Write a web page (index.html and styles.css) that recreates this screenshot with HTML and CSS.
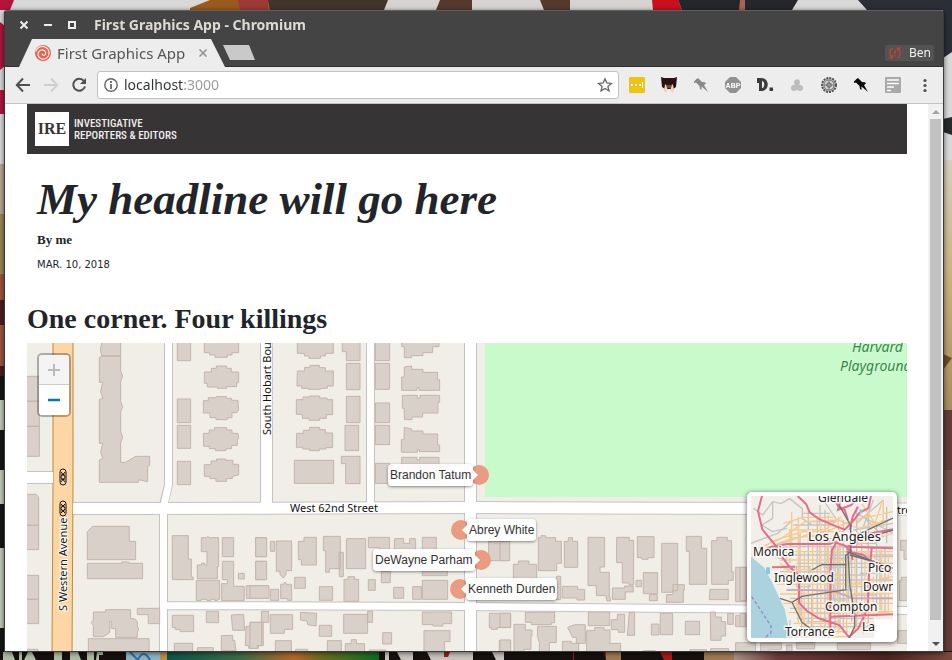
FILE: index.html
```html
<!DOCTYPE html>
<html lang="en">
<head>
<meta charset="utf-8">
<title>First Graphics App</title>
<link rel="stylesheet" href="styles.css">
</head>
<body>
<svg class="wallpaper" viewBox="0 0 952 660" preserveAspectRatio="none" aria-hidden="true">
  <defs>
    <linearGradient id="poster"><stop offset="0" stop-color="#0f5348"/><stop offset=".35" stop-color="#3d6a48"/><stop offset=".6" stop-color="#b5652a"/><stop offset=".72" stop-color="#6d6a22"/><stop offset="1" stop-color="#0f6a24"/></linearGradient>
    <linearGradient id="rust"><stop offset="0" stop-color="#a58f84"/><stop offset=".2" stop-color="#6d3b3c"/><stop offset=".7" stop-color="#4a2422"/><stop offset="1" stop-color="#7b4a3f"/></linearGradient>
    <linearGradient id="paper" x2="0" y2="1"><stop offset="0" stop-color="#d6cfbd"/><stop offset=".5" stop-color="#c8b07a"/><stop offset="1" stop-color="#a98c5c"/></linearGradient>
  </defs>
  <rect width="952" height="660" fill="#d9d8d8"/>
  <path d="M0 0h14l-4 10H0zM0 22l5 4v40l-5 4zM0 90h5v24H0z" fill="#b3143c"/>
  <path d="M190 8l20-8h64l-4 10h-80z" fill="#9a5a1e"/><path d="M238 0h30v10h-28z" fill="#9c3a35"/>
  <path d="M268 0h120v10H270z" fill="#43352c"/><path d="M388 0h264v10H384z" fill="#d7d3d0"/>
  <path d="M440 0h32v10h-36zM540 0h30v10h-26z" fill="#55392d"/>
  <path d="M652 0h26l4 10h-29z" fill="#c9101c"/><path d="M678 0h120l-6 10H682z" fill="#24262b"/>
  <path d="M740 0h5v10h-6z" fill="#a96354"/><path d="M858 0h94v52l-9 6V10h-76z" fill="#2a2e36"/>
  <path d="M943 119l9-2v18l-9-3z" fill="#272b2c"/><path d="M943 160h9v250h-9z" fill="url(#paper)"/>
  <path d="M943 354l9 4-9 12z" fill="#6f4c25"/>
  <path d="M943 410h9v250h-9z" fill="#643c35"/><path d="M943 470h9v60h-9z" fill="#74504a"/>
  <path d="M0 164h5v100H0z" fill="#b5a894"/><path d="M0 214h5v60H0z" fill="#9a8754"/><path d="M0 274h5v110H0z" fill="#9b5640"/>
  <path d="M0 300h5v25H0zM0 366h5v10H0z" fill="#4d1c20"/><path d="M0 376h5v284H0z" fill="#111614"/>
  <path d="M0 400h5v30H0zM0 470h5v34H0zM0 548h5v80H0z" fill="#bfc9b4"/>
  <path d="M0 651h952v9H0z" fill="#16110e"/>
  <path d="M3 652h9l3 8H3zM19 652h3v8h-3zM28 652h4l4 8H24zM54 652h8v8h-8zM70 652h8l3 8H70zM87 652h7v8h-7zM97 652h6v3h-4v5h-3z" fill="#aebba5"/>
  <path d="M126 652h34v8h-34z" fill="#8db1c0"/><path d="M138 660q5-12 12 0M130 652l8 8" fill="none" stroke="#2f6ba0" stroke-width="2"/>
  <path d="M160 652h7v8h-7z" fill="#b98d4a"/>
  <path d="M167 652h212v8H167z" fill="url(#poster)"/>
  <path d="M385 652h4v8h-4zM397 652h16v8h-12zM427 652h46v8h-42zM492 652h12v8h-8z" fill="#c8c3bd"/>
  <path d="M444 652h6l-2 5h-4zM573 652h1v8h-1zM604 652h8v8h-6zM660 652h12v8h-8z" fill="#a41c18"/>
  <path d="M606 652h15v8h-15zM704 652h30v8h-30z" fill="#9c7952"/><path d="M734 652h218v8H734z" fill="url(#rust)"/>
</svg>

<div class="window">
  <header class="titlebar">
    <div class="window-buttons">
      <button type="button" aria-label="Close window"><svg width="10" height="10" viewBox="0 0 10 10"><path d="M1.500 1.500l7 7M8.500 1.500l-7 7" stroke="#eee" stroke-width="2"/></svg></button>
      <button type="button" aria-label="Minimize window"><svg width="10" height="10" viewBox="0 0 10 10"><path d="M1 5h8" stroke="#eee" stroke-width="2"/></svg></button>
      <button type="button" aria-label="Maximize window"><svg width="10" height="10" viewBox="0 0 10 10"><path d="M2 2h6v6H2z" fill="none" stroke="#eee" stroke-width="2"/></svg></button>
    </div>
    <div class="window-title">First Graphics App - Chromium</div>
  </header>

  <div class="tabstrip">
    <div class="tab">
      <svg width="16" height="16" viewBox="0 0 16 16" aria-hidden="true"><circle cx="8" cy="8" r="8" fill="#e9604f"/><path d="M1 6c1-4 6-6 10-3.500 4 2.500 4 8 .5 10.500-3 2-7.500 1-8.300-2.500C2.500 7 5 4.500 8 5c2.500.5 3.500 3 2.200 4.700-1 1.200-2.900.8-3-.7" fill="none" stroke="#fbe3df" stroke-width="1.300" stroke-linecap="round"/></svg>
      <span class="tab-title">First Graphics App</span>
      <button type="button" aria-label="Close tab"><svg width="8" height="8" viewBox="0 0 8 8"><path d="M.5.5l7 7M7.500.5l-7 7" stroke="#8e8e8e" stroke-width="1.500"/></svg></button>
    </div>
    <button class="new-tab" type="button" aria-label="New tab"></button>
    <button class="profile" type="button">
      <svg width="12" height="12" viewBox="0 0 12 12" aria-hidden="true"><g fill="none" stroke="#d93a2b" stroke-width="1.200"><path d="M3.500 1C0 3 0 8 3 10.500M8.500 11c3.500-2 3.500-7 .5-9.500"/><path d="M.5 10.800h3V8M11.500 1.200h-3V4"/><path d="M6 3v4M6 8v1.500"/></g></svg>
      <span>Ben</span>
    </button>
  </div>

  <nav class="toolbar" aria-label="Browser toolbar">
    <div class="nav-buttons">
      <button type="button" aria-label="Back"><svg width="16" height="16" viewBox="0 0 16 16"><path d="M15 8H2M8 1.500L1.800 8 8 14.500" fill="none" stroke="#505050" stroke-width="2"/></svg></button>
      <button type="button" aria-label="Forward" disabled><svg width="16" height="16" viewBox="0 0 16 16"><path d="M1 8h13M8 1.500L14.200 8 8 14.500" fill="none" stroke="#cfcfcf" stroke-width="2"/></svg></button>
      <button type="button" aria-label="Reload"><svg width="16" height="16" viewBox="0 0 16 16"><path d="M13 4a6 6 0 1 0 1 5.500" fill="none" stroke="#505050" stroke-width="2"/><path d="M15 1v6H9z" fill="#505050"/></svg></button>
    </div>
    <div class="omnibox">
      <svg width="14" height="14" viewBox="0 0 14 14" aria-hidden="true"><circle cx="7" cy="7" r="6.200" fill="none" stroke="#666" stroke-width="1.400"/><path d="M7 3v2M7 6v5" stroke="#666" stroke-width="1.800"/></svg>
      <input type="text" aria-label="Address" value="localhost:3000" spellcheck="false">
      <button type="button" aria-label="Bookmark this page"><svg width="16" height="16" viewBox="0 0 16 16"><path d="M8 1.800l1.800 4.200 4.600.4-3.500 3 1.100 4.500L8 11.500l-4 2.400 1.100-4.500-3.500-3L6.200 6z" fill="none" stroke="#666" stroke-width="1.300"/></svg></button>
    </div>
    <div class="extensions">
      <button type="button" aria-label="Passwords"><svg width="16" height="16" viewBox="0 0 16 16"><rect width="16" height="16" rx="1" fill="#f0c313"/><path d="M2 7h2v2H2zM6 7h2v2H6zM10 7h2v2h-2zM13 5h1v6h-1z" fill="#fff"/></svg></button>
      <button type="button" aria-label="Cat"><svg width="16" height="16" viewBox="0 0 16 16"><path d="M0 0l3 1h10l3-1-1 10-3 2H4l-3-2z" fill="#2a1211"/><path d="M4 8l1-1 1 4 1 2-3 3-1-3zM12 8l-1-1-1 4-1 2 3 3 1-3z" fill="#f1d3b6"/><path d="M6 8h4v3H6z" fill="#7c4537"/></svg></button>
      <button type="button" aria-label="Pin"><svg width="16" height="16" viewBox="0 0 16 16"><path d="M5 1l4 4 3 .3 1 1.200-2 1.500L15 15 8.500 9.500 8.500 13 7 12l-.5-3L3 5.500 1 6V4.500L3.500 2z" fill="#898989"/></svg></button>
      <button type="button" aria-label="Ad blocker"><svg width="16" height="16" viewBox="0 0 16 16"><path d="M5 0h6l5 5v6l-5 5H5l-5-5V5z" fill="#929292"/><text x="8" y="11" class="abp">ABP</text></svg></button>
      <button type="button" aria-label="D."><svg width="16" height="16" viewBox="0 0 16 16"><path fill-rule="evenodd" d="M0 1h4c9 0 9 13 0 13H2V6H0zm5 3v7c3 0 3-7 0-7z" fill="#3b3b3b"/><path d="M12.500 10.500H16V14h-3.500z" fill="#3b3b3b"/></svg></button>
      <button type="button" aria-label="Clover"><svg width="16" height="16" viewBox="0 0 16 16"><g fill="#bdbdbd"><circle cx="8" cy="5" r="2.800"/><circle cx="5" cy="11" r="3"/><circle cx="11" cy="11" r="3"/><path d="M5.500 5h5v8h-5z"/></g></svg></button>
      <button type="button" aria-label="Settings gear"><svg width="16" height="16" viewBox="0 0 16 16"><circle cx="8" cy="8" r="7" fill="#b9b9b9" stroke="#565656" stroke-width="2" stroke-dasharray="2 1"/><circle cx="8" cy="8" r="5" fill="#dadada" stroke="#777"/><circle cx="8" cy="8" r="2.300" fill="#999" stroke="#555"/><path d="M8 3v3M8 10v3M3 8h3M10 8h3" stroke="#777"/></svg></button>
      <button type="button" aria-label="Pin page"><svg width="16" height="16" viewBox="0 0 16 16"><path d="M5 1l4 4 3 .3 1 1.200-2 1.500L15 15 8.500 9.500 8.500 13 7 12l-.5-3L3 5.500 1 6V4.500L3.500 2z" fill="#0c0c0c"/></svg></button>
      <button type="button" aria-label="Reader"><svg width="16" height="16" viewBox="0 0 16 16"><rect width="16" height="16" rx="1" fill="#a9a9a9"/><path d="M2 3h12M2 6.500h12M2 10h7M2 13.500h4" stroke="#fff" stroke-width="1.600"/></svg></button>
      <button type="button" aria-label="Menu"><svg width="16" height="16" viewBox="0 0 16 16"><g fill="#505050"><circle cx="8" cy="3.500" r="1.600"/><circle cx="8" cy="8.500" r="1.600"/><circle cx="8" cy="13.500" r="1.600"/></g></svg></button>
    </div>
  </nav>

  <div class="viewport">
    <main class="page">
      <a class="brand" href="#" aria-label="Investigative Reporters and Editors">
        <span class="brand-mark">IRE</span>
        <span class="brand-name">INVESTIGATIVE<br>REPORTERS &amp; EDITORS</span>
      </a>
      <div class="story-head">
        <h1>My headline will go here</h1>
        <p class="byline">By me</p>
        <p class="date">MAR. 10, 2018</p>
      </div>
      <h2>One corner. Four killings</h2>

      <section class="map" aria-label="Map of West 62nd Street">
        <svg class="map-tiles" width="100%" height="100%">
          <g transform="translate(-27 -343)">
            <path class="park" d="M485 343h1500v154H485z"/>
            <g class="casing">
              <path class="w11" d="M20 477.500h34M72 508.500h88L470 507.500 907 509"/>
              <path class="w7" d="M166 605.500l300 1 441 4M168.500 340v145l-5 20V660M370.500 340v166"/>
              <path class="w11" d="M266.500 340v166M470.500 340v320"/>
            </g>
            <g class="road">
              <path class="w11" d="M20 477.500h34M72 508.500h88L470 507.500 907 509"/>
              <path class="w7" d="M166 605.500l300 1 441 4M168.500 340v145l-5 22V660M370.500 340v166"/>
              <path class="w11" d="M266.500 340v166M470.500 340v320"/>
            </g>
            <path class="avenue" d="M53 340v145l-1 175h20l1-175V340z"/>
            <path class="road-patch" d="M50 472h3v11h-3zM73 503h3v11h-3z"/>
          </g>

          <g class="buildings">
            <g transform="translate(-7 -3) scale(.3333)">
              <path d="M15 109h43v75H15zM15 184h43v75H15zM15 259h43v90H15z"/>
              <path d="M246 5h56v43h-56l-5-17zM238 52l8-4h56v45l6 15-6 17v60l6 14-6 17v58l6 18-6 17v58h14l32-18h41v28l-6 2v46l-27-6v8H238v-67l10-4-6-20 6-26h-10V178l10-3-6-22 6-26h-10z"/>
              <path d="M472 5h40v57h-40zM472 177h40v71h-40zM472 256h40v69h-40zM472 364h40v70h-40z"/>
              <path d="M553 5h103v33h-20v7h-14v7h-37v-7h-16v-7h-16z"/>
              <path d="M553 96h21v-11h15v-7h31v7h14v11h22v31l-6 2v11h-30v5h-28v-4h-30v-11h-9z"/>
              <path d="M550 182h15v-9h24v-3h30v5h16v6h19l2 29-6 8h-14v15h-14v6h-34v-6h-18v-14h-20z"/>
              <path d="M550 280h18v-10h16v-7h36v7h16v10h18l2 13-4 9v14h-17v10h-17v6h-32v-6h-18v-7h-17z"/>
              <path d="M553 374h20v-11h17v-6h27v4h22v12h17v32l-19 4v7h-18v8h-31v-8h-18v-7h-17z"/>
            </g>
            <g transform="translate(213 -3) scale(.3333)">
              <path d="M172 5h108v35h-24v8h-15v7h-34v-7h-14v-8h-21z"/>
              <path d="M172 93h22v-11h16v-6h28v7h18v10h24v45h-18v7h-21v3h-36v-3h-20v-7h-14z"/>
              <path d="M169 179h20v-8h20v-3h30v6h22v5h17v45h-19v11h-20v6h-32v-6h-20v-12h-18z"/>
              <path d="M170 280h20v-9h19v-9h30v7h17v10h22v44h-20v4h-20v5h-30v-5h-20v-5h-19z"/>
              <path d="M163 361h118v69H163zM307 5h53v57h-41V35h-12zM319 70h41v79h-41zM319 169h41v79h-41zM315 256h41v76h-41zM304 349h56v82h-43v-60h-13z"/>
              <path d="M406 5h43v57h-43zM406 70h43v78h-43zM406 189h43v59h-43zM406 256h43v58h-43zM406 370h43v60h-43z"/>
              <path d="M485 5h112v15h-19v18h-29v9h-34v6h-22V20h-8z"/>
              <path d="M493 81l22-3v10h34v9h44v22h6v32h-62v-8h-6v8h-46v-40h8z"/>
              <path d="M487 166h45v9h8v-9h59v21h-5v32h-46v12h-32v8h-23v-34h-6z"/>
              <path d="M493 262l22 5v6h34v9h44v33h6v20h-61v-6h-6v8h-48v-38h8z"/>
              <path d="M485 352h46v8h8v-8h58v70H485z"/>
            </g>
            <g transform="translate(-7 147) scale(.3333)">
              <path d="M15 13h33l8 8v85H15zM15 106h41v73H15zM15 256h41v72H15zM15 328h41v73H15zM15 478h39v20H15z"/>
              <path d="M202 125l16-16h110v45h19v55H202zM202 220h103v-4h22v4h41v46H202z"/>
              <path d="M220 366h37v-7h75v27h12l8 9v13l4 10-4 9v15h-65v-26h-13v-22h-5v34l-18 12h-31v-34l-6-8 6-8zM352 355h67v46h-34v-27h-33zM205 446h182v50H205z"/>
              <path d="M457 137h48v70h9v53l6 2v7h-63zM544 143h16l3-4 5 4h28v87h-4v36h-60v-41h13v-6h8v6h8v-40h-17zM607 143h34v57h-34zM655 250h18v17h-18zM707 143h30v57h-30zM707 214h30v55h-30z"/>
              <path d="M529 271h70v57h-6v4h-8v-4h-13v4h-11v-4h-18v4h-14zM607 214h34v75h32v43h-68v-51h17v-12h-15zM679 287h60v38h-60z"/>
              <path d="M457 376h64v49h-40v-6h-14v-6h-10zM559 364h37v34h-37zM634 375l37-2 3 48h-36zM604 437l34-1v15h6l4 31h-44zM463 460h55v30h-55zM532 473h48v20h-48zM678 409h12v-12h40v70h-15v8h-29v-8h-10z"/>
            </g>
            <g transform="translate(223 147) scale(.3333)">
              <path d="M17 143h33v57H17zM17 214h33v55H17zM61 154h13v30H61zM79 153h46v89h-17v12l-8 10-10-10v-10H79zM145 154h17v-12h37v83h-45v-16h-9zM220 139h51v97h-33v11h-11v-65h-7zM267 187h13v73h-12zM289 146h58v90h-58z"/>
              <path d="M355 142h64v60h-30v-29h-34zM433 146h28v14h18v-14h18v56h-64zM517 142h42v60h-42zM517 230h75v27h-75zM394 244h27v34h-27z"/>
              <path d="M0 287h57v38H0zM61 298h25v33H61zM92 283h10v-5h6v5h17v48h-12v-5H92zM134 262h32v33h-32zM208 290h40v41h-40zM282 268h12v-8h20v8h12v66h-44zM355 269h21v32h-21zM431 292h30v33h-30zM488 290h26v38h-26zM517 271h76v57h-76z"/>
              <path d="M34 364h22v33H34zM0 397h35v70H22v8H0zM61 374h67v44h-25v12H61zM152 367l48 3-2 38-25-4-2-11-20-3zM208 406h37v33h-37zM281 373h72v57h-72zM353 364h15v33h-15zM398 428h27v34h-27zM517 366h88v35h-26v7h-30v-4h-32zM522 422h78v33h-16v40h-62z"/>
              <path d="M76 452h48v40H76zM137 478h36v20h-36zM232 452h42v40h-42zM286 461h18v-12h15v12h25v30h-58zM358 480h50v20h-50z"/>
              <path d="M716 154h60v58h-60zM718 370h64v43h-40v5h-18v-5h-6zM748 451h32v40h-32z"/>
            </g>
            <g transform="translate(473 147) scale(.3333)">
              <path d="M0 154h29v58H0zM40 223h15v-10h32v10h23v60H40zM115 143h8v-6h14v6h30v11h17v66h-14v22h-55zM193 154h12v-11h13v11h15v78h-40zM170 259h12v70h-12zM187 289h46v9h21v32h-23v-6h-44z"/>
              <path d="M264 142h50v89h-14v16h28v68l4 18h-11l-4-16h-28v-30h-25zM350 142h38v9h13v134h-14v-6h-20v-61h-17zM337 294h37v-6h26v18h-24v22h-39zM412 140h50v63h-18v5h-18v-5h-14zM408 271h17v19h-17zM430 248h43v63h-43zM448 314h24v18h-24zM485 160h48v142h-15v5h-33zM499 314h20v-30h34v17h-3v36h-51z"/>
              <path d="M559 139h45v36h16v108h-52v-99h-9zM635 152h16v-10h31v10h13v93h5v26h-15v12h-50zM630 298h55v31h-57zM707 232h60v103h-60z"/>
              <path d="M0 370h32v42H0zM0 450h32v40H0zM76 367h88v31h-10v6H94v-7H76zM42 403h34v17h20v18h-3v40H72v12H42zM113 409h56v49h-21v40h-30v-41l-6-18zM203 412l21-8h32v56h-27v-18h-12zM187 454h27v6h22v40h-49zM265 366h64v41h-64zM260 422h24v-9h28v7h18v40h32v40H260z"/>
              <path d="M334 389h18v-16h22v54h-19v-8h-21zM388 367h16v69h-22zM454 402h23v33h-23zM481 370h37v64h-37zM556 394h43v40h-43zM631 366h15v15h18v14h13v43h-14v13h-31zM683 370h17v33h-17zM707 377h50v33h-50zM707 458h60v40h-60zM430 482h36v12h-36zM570 479h50v12h-50zM632 476h54v20h-54z"/>
            </g>
            <g transform="translate(713 137) scale(.3333)">
              <path d="M482 181h30v57h-20v-27h-10zM478 302h6v-10h30v70h-36zM473 452h34v-32h20v70h-54zM0 262h18v100H0zM0 400h16v40H0zM62 489h62v20h-36v20H62zM140 495h16v30h-16zM170 487h54v20h-54zM292 489h100v20H292z"/>
            </g>
          </g>

          <g class="signals">
            <rect x="33" y="126" width="6" height="16" rx="3"/><path d="M34.500 131.500h3M34.500 136.500h3M34 129l2 2.500 2-2.500M34 139l2-2.500 2 2.500"/><circle cx="36" cy="134" r="2"/>
            <rect x="33" y="158" width="6" height="15" rx="3"/><path d="M34.500 163h3M34.500 168h3M34 161l2 2 2-2M34 170l2-2 2 2"/><circle cx="36" cy="165.500" r="2"/>
          </g>
          <g class="street-label">
            <text x="263" y="169">West 62nd Street</text>
            <text x="870" y="171">treet</text>
            <text transform="translate(244 92) rotate(-90)">South Hobart Boulevard</text>
            <text transform="translate(40 268) rotate(-90)">S Western Avenue</text>
          </g>
          <g class="park-label"><text x="825" y="9">Harvard</text><text x="813" y="28">Playground</text></g>
          <g class="dots"><circle cx="452" cy="132" r="10"/><circle cx="434" cy="187" r="10"/><circle cx="454" cy="217" r="10"/><circle cx="433" cy="246" r="10"/></g>
        </svg>

        <span class="pin pin-left tatum">Brandon Tatum</span>
        <span class="pin pin-right white">Abrey White</span>
        <span class="pin pin-left parham">DeWayne Parham</span>
        <span class="pin pin-right durden">Kenneth Durden</span>

        <div class="zoom">
          <button type="button" aria-label="Zoom in" disabled><svg width="12" height="12" viewBox="0 0 12 12"><path d="M6 0v12M0 6h12" stroke="#bbb" stroke-width="2"/></svg></button>
          <button type="button" aria-label="Zoom out"><svg width="12" height="12" viewBox="0 0 12 12"><path d="M0 6h12" stroke="#0078c0" stroke-width="2.500"/></svg></button>
        </div>

        <svg class="inset" viewBox="0 0 142 142" role="img" aria-label="Los Angeles area">
          <g transform="translate(-11 -16) scale(.3333)">
            <path d="M33 48h426v426H33z" fill="#f2efe9"/>
            <g fill="none" stroke="#c6c4c2" stroke-width="4">
              <path d="M40 85l28 20 30-40 25 6 26-15 38 30v30l28 18M98 65v50l-32 20 30 20 45-10M33 190l80-30 46-40M150 200h309M130 225h329M170 250h289M120 275h150M140 300h319M140 330h200M150 355h309M150 385h170M170 415h230M180 440h220M150 150v100M180 160v250M205 90v340M232 110v300M255 90v360M285 190v260M300 190v260M310 120v280M350 80v360M365 180v230M385 100v300M410 130v280M435 200v200M350 100l109 60M340 150l119-20M350 130l80-70M250 60l40 60"/>
              <path d="M240 185h90v70h-90zM280 200h40v160h-40zM60 220l80-20v40zM170 260h40v60h-40zM345 160h60v30h-60z"/>
              <path d="M190 100h80M200 125h90M160 135h120M240 75v60M260 215h70M260 235h70M250 262h150M250 285h130M262 200v160M274 200v160M292 200v150M325 200v200M335 235v190M330 320h120M330 345h80M210 370h100M210 400h90M200 425h100M215 350v100M270 370v90M310 370v90M150 420v50M185 330v130M370 110l60 60M400 60l-30 80M440 80v110M420 210v180M360 230h99M360 280h60M380 330h79M90 200l60-22M75 228l60-10M370 370v90M385 360v80"/>
            </g>
            <g fill="none" stroke="#f9c98c" stroke-width="4">
              <path d="M33 235l120-60 80-10 110-45 116-25M55 205l70-30 70-50 100-5 60 25 104-30M70 210l130-45 130 20M90 185l100-30h120M130 130l60-18h90M145 150h110l50-40M110 215h349M120 240h200M130 268h110M110 285h220M110 312h270M120 342h260M130 370h329M145 398h300M160 430h240M145 455h180M150 470h170M155 95v120M175 110v320M193 215v245M218 180v290M242 130v340M265 105v360M295 110v350M320 220v240M345 220v230M375 230v220M400 290v120M425 210v190M445 220v180M350 195l109-35M350 170l80-50M370 215l80 45M120 250l60 50-10 80 30 60M340 310l119-20M345 340h114M350 395h109M365 70l40 60 20-60M430 60v80"/>
            </g>
            <g fill="none" stroke="#e46d8a" stroke-width="6">
              <path d="M66 48l-12 45 13 55 20 25 20 24 18 32 24 32 28 25v82l24 25 35 22 62 20 30 38M80 204l60-12h129l14-6 35 12 12 18 40 8 30 30 54 24M173 48l26 25 10 24 28 20 46 20 31 12 22-22 24-30 25-12 8-38M280 48l14 30 20 12 10 30M288 190l-12 20-5 60v180M270 410l189-7M395 205l-8 80-4 100-28 60-27 25M459 148l-66 12-70 40 136 5M96 262l70-2M305 48l-11 42 40-15 23-27M330 150l8-40 16-30M330 200l8 40"/>
            </g>
            <path d="M140 330h50l90 3 60 22h119" fill="none" stroke="#cba2bb" stroke-width="5"/>
            <g fill="none" stroke="#707070" stroke-width="4">
              <path d="M298 76l34 60v80l-15 10v100M324 220l6 100 14 80v40l-16 34M320 215l139 50M330 225l70 20M340 170l119-56M345 185l114-35M215 270l30-16h75M120 355l36 12 30-18 134-20M156 367l30 60 40 30"/>
            </g>
            <path d="M33 230l40 33 26 50 35 75 18 86H33z" fill="#aad3df"/>
            <path d="M35 350l28 42 30 46v20l-22 18" fill="none" stroke="#9a87c0" stroke-width="4" stroke-dasharray="10 7"/>
            <path d="M78 262h12v20H78zM359 88h8v12h-8zM130 60l-6-10M440 220l10 15" fill="#8fc6e6"/>
            <path d="M403 418h60v60h-60z" fill="#fff"/>
          </g>
          <g class="city"><text x="67" y="6">Glendale</text><text x="57" y="45" class="major">Los Angeles</text><text x="2" y="60">Monica</text><text x="117" y="76">Pico</text><text x="23" y="86">Inglewood</text><text x="112" y="95">Down</text><text x="74" y="115">Compton</text><text x="111" y="135">La</text><text x="34" y="140">Torrance</text></g>
        </svg>
      </section>
    </main>
    <div class="scrollbar" aria-hidden="true">
      <span class="arrow up"></span><span class="thumb"></span><span class="arrow down"></span>
    </div>
  </div>
</div>
</body>
</html>
```
FILE: styles.css
```css
* { box-sizing: border-box; }

html, body { height: 100%; margin: 0; }

body {
  padding: 10px 8px 8px 4px;
  overflow: hidden;
  font-family: "Noto Sans", "Open Sans", sans-serif;
}

button { display: flex; align-items: center; justify-content: center; padding: 0; border: 0; background: none; font: inherit; }
svg { display: block; flex: none; }

.wallpaper { position: fixed; inset: 0; z-index: -1; width: 100%; height: 100%; }

.window {
  display: flex;
  flex-direction: column;
  height: 100%;
  border: 1px solid #3a3a3a;
  border-top-color: #606060;
  border-radius: 3px 3px 0 0;
  background: #444;
  box-shadow: 0 1px 5px rgba(0, 0, 0, .6);
}

/* Window frame */
.titlebar { display: flex; align-items: center; gap: 17px; height: 28px; padding-left: 14px; }
.window-buttons { display: flex; gap: 14px; }
.window-title { color: #dfdbd2; font-size: 14px; font-weight: 700; line-height: 20px; }

.tabstrip { display: flex; align-items: center; height: 28px; padding-right: 9px; border-bottom: 1px solid #303030; }
.tab {
  display: flex;
  align-items: center;
  align-self: stretch;
  width: 206px;
  margin: 0 -2px -1px 14px;
  padding: 0 18px 0 16px;
  gap: 6px;
  background: #ededed;
  clip-path: polygon(13px 0, 192px 0, 100% 100%, 0 100%);
}
.tab-title { flex: 1; color: #555; font-size: 15px; line-height: 20px; white-space: nowrap; }
.new-tab { width: 32px; height: 15px; background: #c9c9c9; clip-path: polygon(0 0, 26px 0, 100% 100%, 7px 100%); }
.profile { gap: 8px; height: 16px; margin-left: auto; padding: 0 3px 0 4px; border-radius: 2px; background: #535353; color: #f3f3f3; font-size: 12px; }

.toolbar { display: flex; align-items: center; gap: 10px; height: 37px; padding: 0 10px; border-bottom: 1px solid #c4c4c4; background: #ededed; }
.nav-buttons { display: flex; gap: 12px; }
.extensions { display: flex; gap: 16px; }
.abp { fill: #fff; font: 700 7px "Liberation Sans", sans-serif; text-anchor: middle; }
.omnibox { display: flex; flex: 1; align-items: center; gap: 6px; height: 28px; padding: 0 5px 0 6px; border: 1px solid #c2c2c2; border-radius: 3px; background: #fff; }
.omnibox input {
  flex: 1;
  min-width: 0;
  padding: 0;
  border: 0;
  outline: 0;
  background: linear-gradient(90deg, #2f3335 59px, #999 59px);
  background-clip: text;
  color: transparent;
  font: 14px/20px "Noto Sans", sans-serif;
}

/* Page */
.viewport { display: flex; flex: 1; min-height: 0; background: #fff; }
.page { display: flex; flex: 1; flex-direction: column; min-width: 0; padding: 0 21px 0 22px; color: #212529; }
.brand { display: flex; align-items: center; gap: 5px; height: 50px; padding: 0 8px; background: #373435; color: #eee; text-decoration: none; }
.brand-mark { width: 34px; background: #fff; color: #373435; font: 700 16px/34px "Liberation Serif", serif; text-align: center; }
.brand-name { padding-top: 1px; font: 500 11px/12px "Roboto Condensed", "Liberation Sans Narrow", "Liberation Sans", sans-serif; }
.story-head { padding: 18px 10px 27px; }
h1, h2, p { margin: 0; }
h1 { font: italic 700 45px/54px "Liberation Serif", serif; }
h2 { margin-bottom: 7px; font: 700 28px/34px "Liberation Serif", serif; }
.byline { margin-top: 4px; font: 700 13px/20px "Liberation Serif", serif; }
.date { margin-top: 5px; font: 10px/20px "DejaVu Sans", sans-serif; }

.scrollbar { display: flex; flex-direction: column; align-items: center; justify-content: space-between; width: 15px; padding: 6px 2px 5px; background: #f1f1f1; }
.thumb { flex: 1; align-self: stretch; margin: 5px 0 22px; background: #c1c1c1; }
.arrow { border: 4px solid transparent; }
.up { border-top: 0; border-bottom-color: #a3a3a3; }
.down { border-bottom: 0; border-top-color: #505050; }

/* Map */
.map { position: relative; flex: 1; min-height: 0; overflow: hidden; background: #f1eee8; }
.park { fill: #c8facc; }
.casing, .road { fill: none; }
.casing { stroke: #c3c3c3; }
.road { stroke: #fff; }
.casing .w11 { stroke-width: 13px; }
.casing .w7 { stroke-width: 9px; }
.road .w11 { stroke-width: 11px; }
.road .w7 { stroke-width: 7px; }
.road-patch { fill: #fff; }
.avenue { fill: #fcd6a4; stroke: #bd8b34; }
.buildings { fill: #d9d0c9; stroke: #c4b5aa; stroke-width: 3px; }
.signals { fill: none; stroke: #111; stroke-width: 1px; }
.street-label { fill: #111; stroke: #fff; stroke-width: 2px; paint-order: stroke; font-size: 11px; }
.park-label { fill: #2f8a3d; stroke: #dffbe1; stroke-width: 1px; paint-order: stroke; font-size: 14px; font-style: italic; }
.dots { fill: #ea9c83; }

.pin { position: absolute; padding: 1px 2px; border-radius: 4px; background: rgba(255, 255, 255, .93); box-shadow: 0 1px 3px rgba(0, 0, 0, .45); color: #333; font: 12px/20px "Liberation Sans", sans-serif; white-space: nowrap; }
.pin::after { content: ""; position: absolute; top: 6px; border: 5px solid transparent; }
.pin-left::after { left: 100%; border-right: 0; border-left-color: #fff; }
.pin-right::after { right: 100%; border-left: 0; border-right-color: #fff; }
.tatum { top: 121px; left: 361px; }
.white { top: 176px; left: 440px; }
.parham { top: 206px; left: 346px; }
.durden { top: 235px; left: 439px; }

.zoom { position: absolute; top: 10px; left: 10px; border: 2px solid rgba(0, 0, 0, .28); border-radius: 5px; background-clip: padding-box; }
.zoom button { width: 30px; height: 30px; background: #fff; }
.zoom button:first-child { border-bottom: 1px solid #ccc; border-radius: 3px 3px 0 0; background: #f4f4f4; }
.zoom button:last-child { border-radius: 0 0 3px 3px; }

.inset { position: absolute; right: 10px; bottom: 9px; width: 150px; height: 150px; border: 4px solid #fff; border-radius: 5px; background: #fff; box-shadow: 0 1px 5px rgba(0, 0, 0, .65); }
.city { fill: #222; stroke: #fff; stroke-opacity: .8; stroke-width: 3px; paint-order: stroke; font-size: 12px; }
.city .major { font-size: 13px; }
```
